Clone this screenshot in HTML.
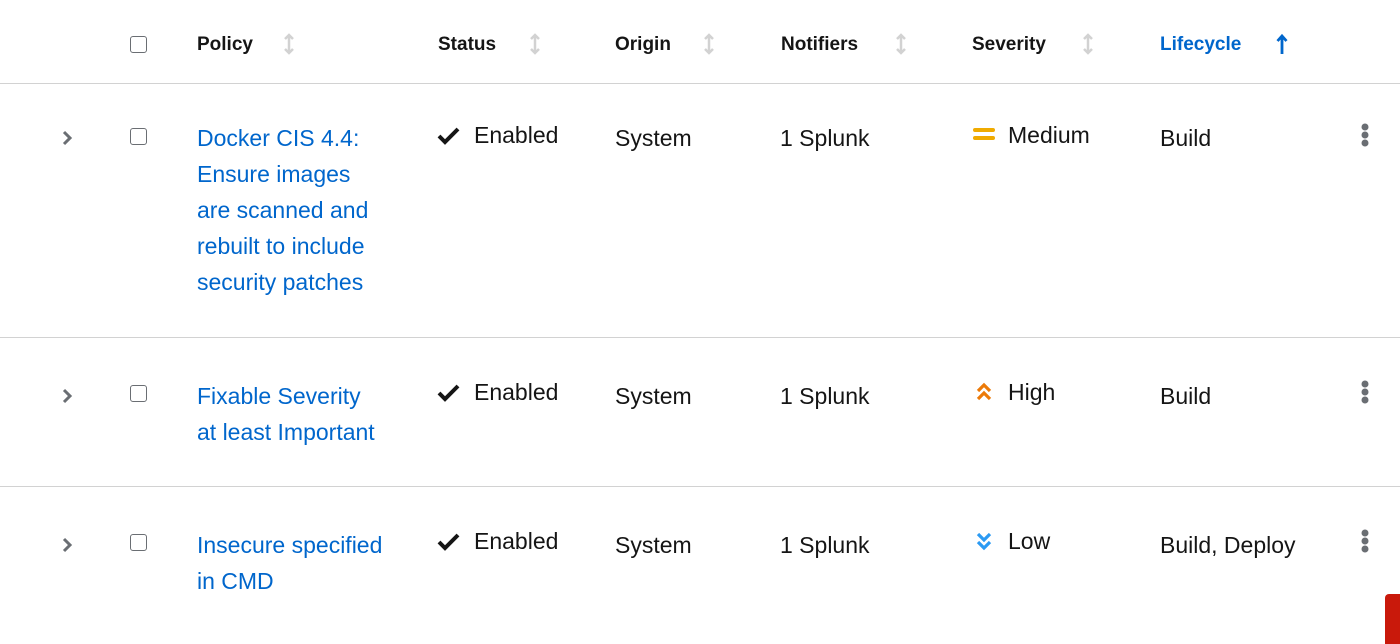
<!DOCTYPE html>
<html><head><style>
body{margin:0;width:1400px;height:634px;overflow:hidden;background:#fff;font-family:"Liberation Sans",sans-serif;color:#151515;position:relative}
.a{position:absolute;white-space:nowrap}
.h{font-size:19px;font-weight:bold;line-height:24px;top:33px}
.t{font-size:23px;line-height:36px}
.l{color:#0066cc}
.cb{position:absolute;width:15px;height:15px;border:1.5px solid #6a6e73;border-radius:3px;left:130px;box-sizing:border-box}
.hr{position:absolute;left:0;width:1400px;height:1px;background:#d2d2d2}
.sort{position:absolute;top:33px}
</style></head><body>
<div class="cb" style="top:36px;width:17px;height:17px"></div>
<div class="a h" style="left:197px">Policy</div>
<div class="a h" style="left:438px">Status</div>
<div class="a h" style="left:615px">Origin</div>
<div class="a h" style="left:781px">Notifiers</div>
<div class="a h" style="left:972px">Severity</div>
<div class="a h l" style="left:1160px">Lifecycle</div>
<svg class="sort" style="left:283px" width="12" height="22" viewBox="0 0 12 22"><path d="M6 2v18M2 6l4-4 4 4M2 16l4 4 4-4" stroke="#d2d2d2" stroke-width="2.5" fill="none"/></svg>
<svg class="sort" style="left:529px" width="12" height="22" viewBox="0 0 12 22"><path d="M6 2v18M2 6l4-4 4 4M2 16l4 4 4-4" stroke="#d2d2d2" stroke-width="2.5" fill="none"/></svg>
<svg class="sort" style="left:703px" width="12" height="22" viewBox="0 0 12 22"><path d="M6 2v18M2 6l4-4 4 4M2 16l4 4 4-4" stroke="#d2d2d2" stroke-width="2.5" fill="none"/></svg>
<svg class="sort" style="left:895px" width="12" height="22" viewBox="0 0 12 22"><path d="M6 2v18M2 6l4-4 4 4M2 16l4 4 4-4" stroke="#d2d2d2" stroke-width="2.5" fill="none"/></svg>
<svg class="sort" style="left:1082px" width="12" height="22" viewBox="0 0 12 22"><path d="M6 2v18M2 6l4-4 4 4M2 16l4 4 4-4" stroke="#d2d2d2" stroke-width="2.5" fill="none"/></svg>
<svg class="sort" style="left:1276px" width="12" height="22" viewBox="0 0 12 22"><path d="M6 3v18M1.5 8l4.5-5 4.5 5" stroke="#0066cc" stroke-width="2.8" fill="none"/></svg>
<div class="hr" style="top:83px"></div>
<div class="hr" style="top:337px"></div>
<div class="hr" style="top:486px"></div>

<!-- row1 -->
<svg class="a" style="left:62px;top:130px" width="12" height="16"><path d="M2 2l6 6-6 6" stroke="#6a6e73" stroke-width="3" fill="none"/></svg>
<div class="cb" style="top:128px;width:17px;height:17px"></div>
<div class="a t l" style="left:197px;top:120px">Docker CIS 4.4:<br>Ensure images<br>are scanned and<br>rebuilt to include<br>security patches</div>
<svg class="a" style="left:437px;top:126px" width="24" height="20"><path d="M2 10l6 6L21 3" stroke="#151515" stroke-width="4" fill="none"/></svg>
<div class="a t" style="left:474px;top:117px">Enabled</div>
<div class="a t" style="left:615px;top:120px">System</div>
<div class="a t" style="left:780px;top:120px">1 Splunk</div>
<svg class="a" style="left:973px;top:126px" width="22" height="18"><rect x="0" y="2" width="22" height="4" rx="2" fill="#f0ab00"/><rect x="0" y="10" width="22" height="4" rx="2" fill="#f0ab00"/></svg>
<div class="a t" style="left:1008px;top:117px">Medium</div>
<div class="a t" style="left:1160px;top:120px">Build</div>
<svg class="a" style="left:1359px;top:123px" width="12" height="26"><circle cx="6" cy="4" r="3.5" fill="#6a6e73"/><circle cx="6" cy="12" r="3.5" fill="#6a6e73"/><circle cx="6" cy="20" r="3.5" fill="#6a6e73"/></svg>

<!-- row2 -->
<svg class="a" style="left:62px;top:388px" width="12" height="16"><path d="M2 2l6 6-6 6" stroke="#6a6e73" stroke-width="3" fill="none"/></svg>
<div class="cb" style="top:385px;width:17px;height:17px"></div>
<div class="a t l" style="left:197px;top:378px">Fixable Severity<br>at least Important</div>
<svg class="a" style="left:437px;top:383px" width="24" height="20"><path d="M2 10l6 6L21 3" stroke="#151515" stroke-width="4" fill="none"/></svg>
<div class="a t" style="left:474px;top:374px">Enabled</div>
<div class="a t" style="left:615px;top:378px">System</div>
<div class="a t" style="left:780px;top:378px">1 Splunk</div>
<svg class="a" style="left:975px;top:382px" width="18" height="20"><path d="M3 9l6-6 6 6M3 17l6-6 6 6" stroke="#ec7a08" stroke-width="3.2" fill="none"/></svg>
<div class="a t" style="left:1008px;top:374px">High</div>
<div class="a t" style="left:1160px;top:378px">Build</div>
<svg class="a" style="left:1359px;top:380px" width="12" height="26"><circle cx="6" cy="4" r="3.5" fill="#6a6e73"/><circle cx="6" cy="12" r="3.5" fill="#6a6e73"/><circle cx="6" cy="20" r="3.5" fill="#6a6e73"/></svg>

<!-- row3 -->
<svg class="a" style="left:62px;top:537px" width="12" height="16"><path d="M2 2l6 6-6 6" stroke="#6a6e73" stroke-width="3" fill="none"/></svg>
<div class="cb" style="top:534px;width:17px;height:17px"></div>
<div class="a t l" style="left:197px;top:527px">Insecure specified<br>in CMD</div>
<svg class="a" style="left:437px;top:532px" width="24" height="20"><path d="M2 10l6 6L21 3" stroke="#151515" stroke-width="4" fill="none"/></svg>
<div class="a t" style="left:474px;top:523px">Enabled</div>
<div class="a t" style="left:615px;top:527px">System</div>
<div class="a t" style="left:780px;top:527px">1 Splunk</div>
<svg class="a" style="left:975px;top:531px" width="18" height="20"><path d="M3 3l6 6 6-6M3 11l6 6 6-6" stroke="#2b9af3" stroke-width="3.2" fill="none"/></svg>
<div class="a t" style="left:1008px;top:523px">Low</div>
<div class="a t" style="left:1160px;top:527px">Build, Deploy</div>
<svg class="a" style="left:1359px;top:529px" width="12" height="26"><circle cx="6" cy="4" r="3.5" fill="#6a6e73"/><circle cx="6" cy="12" r="3.5" fill="#6a6e73"/><circle cx="6" cy="20" r="3.5" fill="#6a6e73"/></svg>

<div class="a" style="left:1385px;top:594px;width:20px;height:50px;background:#c9190b;border-radius:4px 0 0 0"></div>
</body></html>
